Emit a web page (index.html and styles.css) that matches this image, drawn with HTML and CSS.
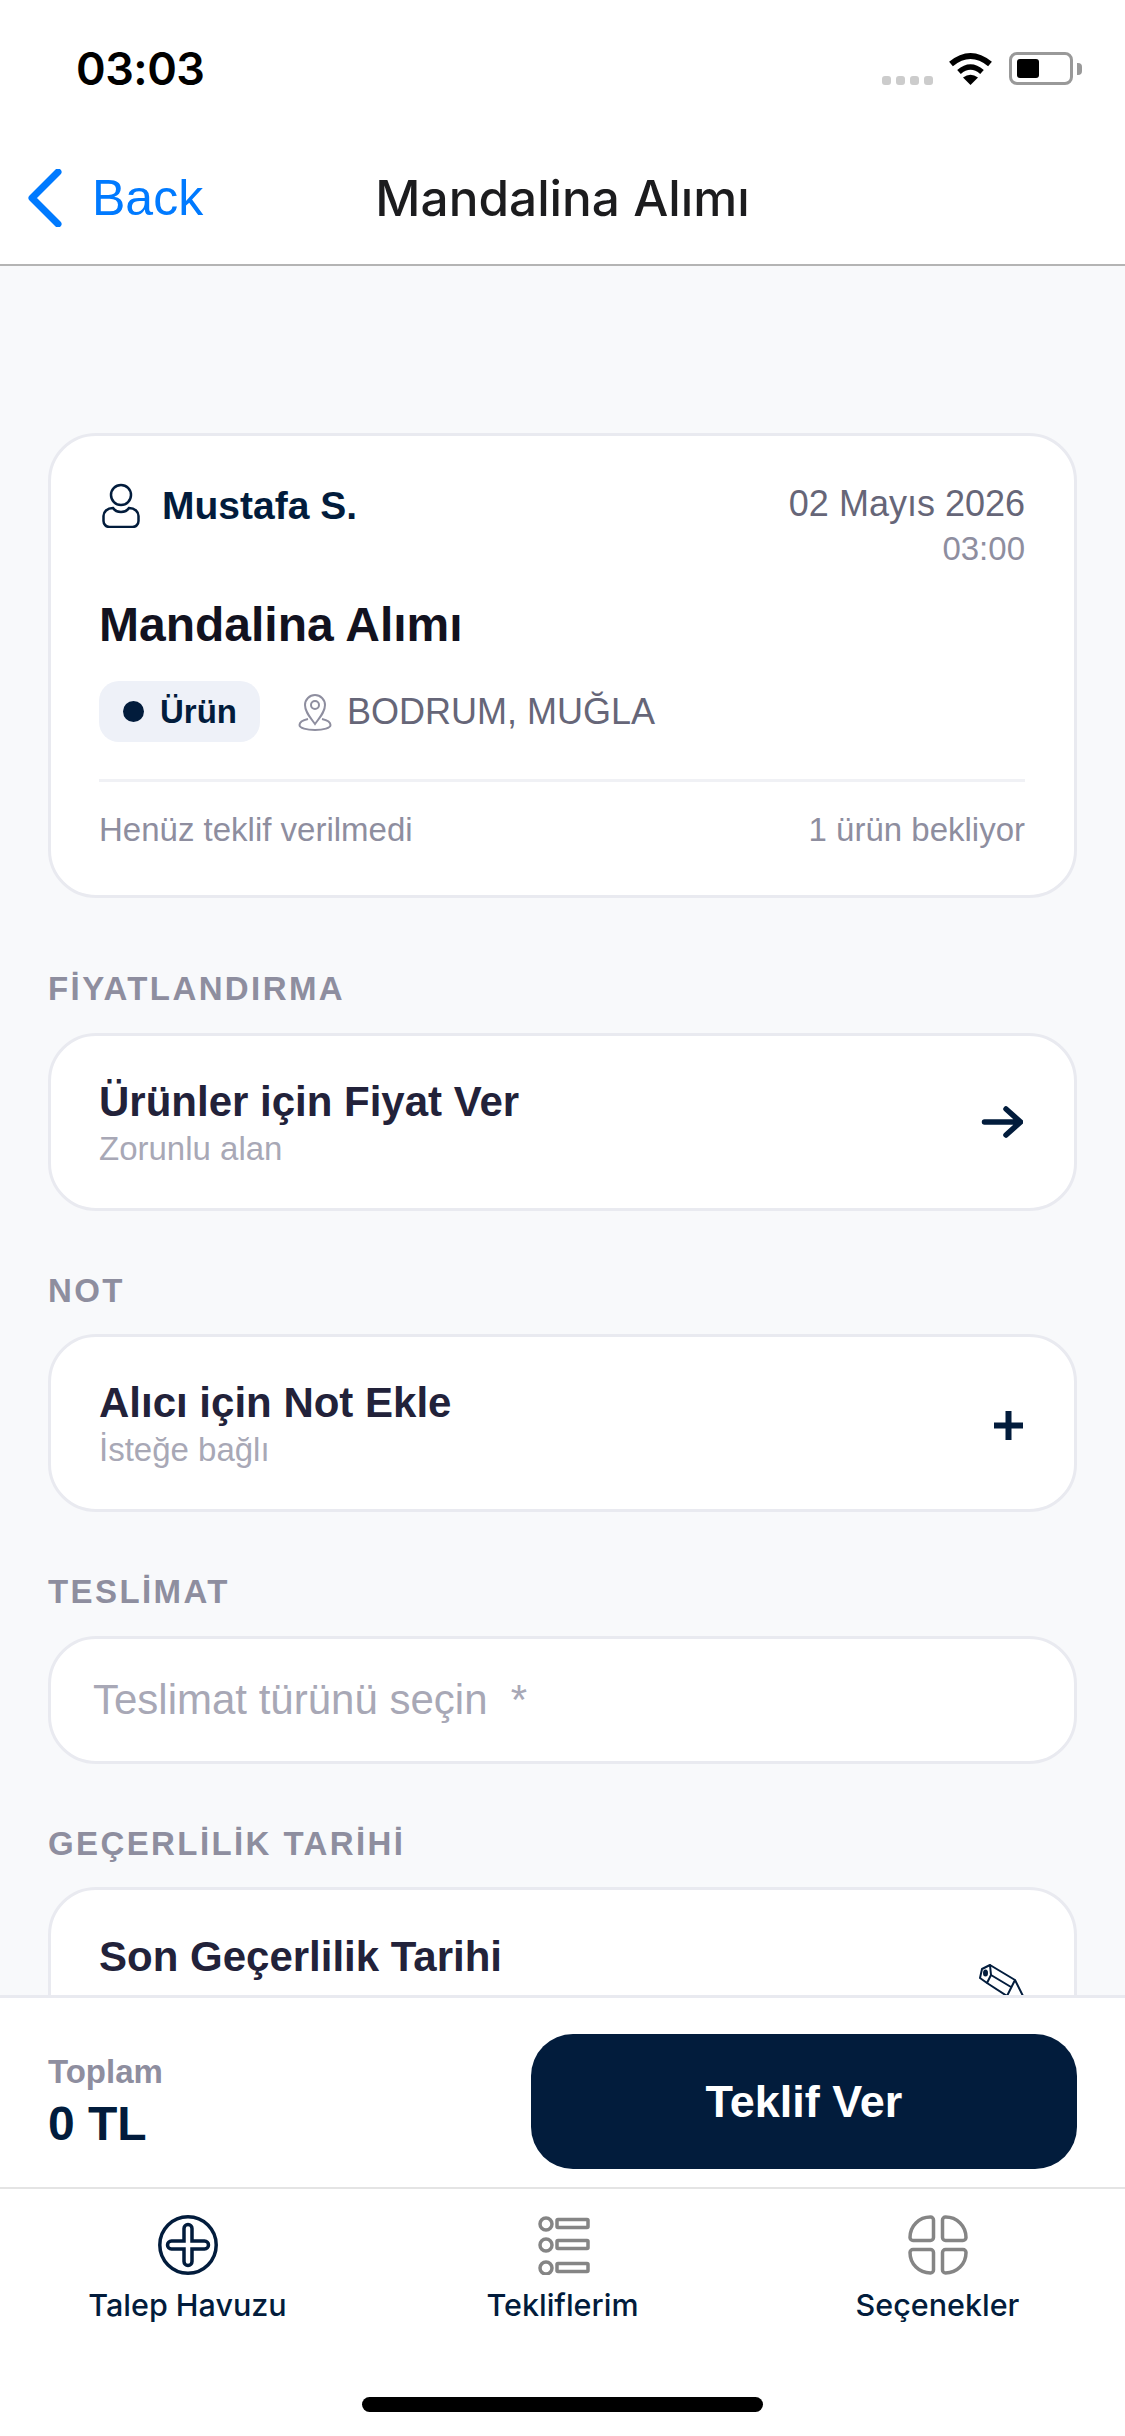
FILE: index.html
```html
<!DOCTYPE html>
<html lang="tr">
<head>
    <meta charset="UTF-8">
    <meta name="viewport" content="width=device-width, initial-scale=1.0">
    <title>Mandalina Alımı</title>
    <link rel="stylesheet" href="styles.css">
</head>
<body>
<div class="page">
    <div class="status-bar">
        <span class="clock">03:03</span>
        <div class="status-icons">
            <div class="signal"><i></i><i></i><i></i><i></i></div>
            <svg class="wifi" width="45" height="33" viewBox="0 0 45 33">
                <path d="M3 12Q22.5-4 42 12" fill="none" stroke="#000" stroke-width="6"/>
                <path d="M11 20Q22.5 10 34 20" fill="none" stroke="#000" stroke-width="5.5"/>
                <path d="M22.5 33L15 25.5Q22.5 20 30 25.5Z" fill="#000"/>
            </svg>
            <div class="battery"><div class="battery-level"></div></div>
            <div class="battery-nub"></div>
        </div>
    </div>

    <header class="nav">
        <a class="back">
            <svg width="34" height="58" viewBox="0 0 34 58">
                <path d="M30 3L4 29L30 55" fill="none" stroke="#007aff" stroke-width="7" stroke-linecap="round" stroke-linejoin="round"/>
            </svg>
            <span>Back</span>
        </a>
        <h1 class="nav-title">Mandalina Alımı</h1>
    </header>

    <main class="content">
        <section class="card request">
            <div class="request-top">
                <div class="user">
                    <svg width="38" height="45" viewBox="0 0 38 45">
                        <circle cx="19" cy="12" r="10" fill="none" stroke="#021c3c" stroke-width="2.5"/>
                        <path d="M11 25C5 25 1.5 29 1.5 33v5a6 6 0 0 0 6 6h23a6 6 0 0 0 6-6v-5c0-4-3.500-8-9.500-8c-2 3-5 4-8 4s-6-1-8-4Z" fill="none" stroke="#021c3c" stroke-width="2.500"/>
                    </svg>
                    <span class="user-name">Mustafa S.</span>
                </div>
                <div class="when">
                    <div class="date">02 Mayıs 2026</div>
                    <div class="time">03:00</div>
                </div>
            </div>
            <h2 class="request-title">Mandalina Alımı</h2>
            <div class="request-meta">
                <span class="chip"><i class="dot"></i>Ürün</span>
                <svg class="pin" width="34" height="38" viewBox="0 0 34 38">
                    <path d="M17 31C12 24 7 19 7 12a10 10 0 0 1 20 0c0 7-5 12-10 19Z" fill="none" stroke="#8e8e9f" stroke-width="2"/>
                    <circle cx="17" cy="12" r="4" fill="none" stroke="#8e8e9f" stroke-width="2"/>
                    <path d="M10 26C5 27 1.500 29 1.500 32c0 3 7 5 15.500 5s15.500-2 15.500-5c0-3-3.500-5-8.500-6" fill="none" stroke="#8e8e9f" stroke-width="2"/>
                </svg>
                <span class="place">BODRUM, MUĞLA</span>
            </div>
            <div class="request-foot">
                <span>Henüz teklif verilmedi</span>
                <span>1 ürün bekliyor</span>
            </div>
        </section>

        <section class="section">
            <h3 class="section-label">FİYATLANDIRMA</h3>
            <div class="card row-card">
                <div class="row-text">
                    <div class="row-title">Ürünler için Fiyat Ver</div>
                    <div class="row-sub">Zorunlu alan</div>
                </div>
                <svg width="42" height="34" viewBox="0 0 42 34">
                    <path d="M3.500 17H39M25 4L39.500 17L25 30" fill="none" stroke="#021c3c" stroke-width="5.500" stroke-linecap="round"/>
                </svg>
            </div>
        </section>

        <section class="section">
            <h3 class="section-label">NOT</h3>
            <div class="card row-card">
                <div class="row-text">
                    <div class="row-title">Alıcı için Not Ekle</div>
                    <div class="row-sub">İsteğe bağlı</div>
                </div>
                <svg class="plus" width="29" height="29" viewBox="0 0 29 29">
                    <path d="M14.500 0V29M0 14.500H29" fill="none" stroke="#021c3c" stroke-width="6"/>
                </svg>
            </div>
        </section>

        <section class="section">
            <h3 class="section-label">TESLİMAT</h3>
            <div class="card select">Teslimat türünü seçin  *</div>
        </section>

        <section class="section">
            <h3 class="section-label">GEÇERLİLİK TARİHİ</h3>
            <div class="card row-card">
                <div class="row-text row-text-clipped">
                    <div class="row-title">Son Geçerlilik Tarihi</div>
                </div>
                <svg class="pencil" width="46" height="52" viewBox="0 0 46 52">
                    <g fill="none" stroke="#021c3c" stroke-width="2" stroke-linejoin="round">
                        <path d="M11 1L3 5L1 14L8 19L12 11Z"/>
                        <path d="M11 1L36 16L28 32L8 19M12 11L32 23"/>
                        <path d="M36 16L44 32L46 44L28 32"/>
                    </g>
                    <ellipse cx="6.500" cy="9" rx="2.500" ry="3.500" fill="#021c3c"/>
                </svg>
            </div>
        </section>
    </main>

    <div class="total-bar">
        <div class="total">
            <div class="total-label">Toplam</div>
            <div class="total-value">0 TL</div>
        </div>
        <button class="offer-btn">Teklif Ver</button>
    </div>

    <nav class="tabbar">
        <div class="tabs">
            <div class="tab">
                <svg width="60" height="60" viewBox="0 0 60 60">
                    <circle cx="30" cy="30" r="28.200" fill="none" stroke="#021c3c" stroke-width="3.500"/>
                    <path d="M26 13.500a4 4 0 0 1 8 0V26h12.500a4 4 0 0 1 0 8H34v12.500a4 4 0 0 1-8 0V34H13.500a4 4 0 0 1 0-8H26Z" fill="none" stroke="#021c3c" stroke-width="3.500"/>
                </svg>
                <span>Talep Havuzu</span>
            </div>
            <div class="tab">
                <svg width="60" height="60" viewBox="0 0 60 60" fill="none" stroke="#858585" stroke-width="3.500">
                    <circle cx="13" cy="9" r="6"/>
                    <rect x="24" y="4.500" width="31" height="8" rx="1"/>
                    <circle cx="13" cy="30" r="6"/>
                    <rect x="24" y="25.500" width="31" height="8" rx="1"/>
                    <circle cx="13" cy="53" r="6"/>
                    <rect x="24" y="48.500" width="31" height="8" rx="1"/>
                </svg>
                <span>Tekliflerim</span>
            </div>
            <div class="tab">
                <svg width="60" height="60" viewBox="0 0 60 60" fill="none" stroke="#858585" stroke-width="3.500">
                    <path d="M22.500 2a3 3 0 0 1 3 3v17.500a3 3 0 0 1-3 3H5a3 3 0 0 1-3-3C2 11 11 2 22.500 2Z"/>
                    <path d="M37.500 2a3 3 0 0 0-3 3v17.500a3 3 0 0 0 3 3H55a3 3 0 0 0 3-3C58 11 49 2 37.500 2Z"/>
                    <path d="M22.500 58a3 3 0 0 0 3-3V37.500a3 3 0 0 0-3-3H5a3 3 0 0 0-3 3C2 49 11 58 22.500 58Z"/>
                    <path d="M37.500 58a3 3 0 0 1-3-3V37.500a3 3 0 0 1 3-3H55a3 3 0 0 1 3 3C58 49 49 58 37.500 58Z"/>
                </svg>
                <span>Seçenekler</span>
            </div>
        </div>
        <div class="home-bar"></div>
    </nav>
</div>
</body>
</html>
```

FILE: styles.css
```css
* {
    box-sizing: border-box;
}

body {
    margin: 0;
    font-family: "Liberation Sans", Arial, sans-serif;
    background-color: #fff;
}

h1, h2, h3 {
    margin: 0;
}

.page {
    width: 1125px;
    height: 2436px;
    display: flex;
    flex-direction: column;
    overflow: hidden;
}

/* status bar */
.status-bar {
    height: 150px;
    flex: none;
    display: flex;
    justify-content: space-between;
    align-items: flex-start;
    padding: 42px 43px 0 76px;
}

.clock {
    font-family: Inter, sans-serif;
    font-size: 45px;
    font-weight: 600;
    line-height: 54px;
    letter-spacing: -0.5px;
    color: #000;
}

.status-icons {
    display: flex;
    align-items: flex-end;
    margin-top: 10px;
}

.signal {
    display: flex;
    gap: 5px;
    margin-right: 15px;
}

.signal i {
    width: 9px;
    height: 9px;
    border-radius: 3px;
    background-color: #ccc;
}

.battery {
    width: 64px;
    height: 33px;
    margin-left: 16px;
    padding: 4px 5px;
    border: 3px solid #999;
    border-radius: 8px;
}

.battery-level {
    width: 22px;
    height: 100%;
    background-color: #000;
    border-radius: 3px;
}

.battery-nub {
    width: 5px;
    height: 12px;
    margin: 0 0 10px 4px;
    background-color: #999;
    border-radius: 0 4px 4px 0;
}

/* header */
.nav {
    height: 116px;
    flex: none;
    display: grid;
    grid-template-columns: 1fr auto 1fr;
    align-items: center;
    padding: 0 28px 18px;
    border-bottom: 2px solid #b4b4b4;
}

.back {
    display: flex;
    align-items: center;
    gap: 30px;
    font-size: 50px;
    color: #007aff;
}

.nav-title {
    font-family: Inter, sans-serif;
    font-size: 49.5px;
    font-weight: 500;
    color: #1c1c1e;
}

/* main area */
.content {
    flex: 1;
    min-height: 0;
    overflow: hidden;
    padding: 167px 48px 0;
    background-color: #f8f9fb;
}

.card {
    background-color: #fff;
    border: 3px solid #e9eaf0;
    border-radius: 48px;
}

.request {
    padding: 48px 49px 45px 48px;
    margin-bottom: 69px;
}

.request-top {
    display: flex;
    justify-content: space-between;
}

.user {
    display: flex;
    align-items: center;
    gap: 22px;
    height: 45px;
    margin: -1px 0 0 3px;
}

.user-name {
    font-size: 39px;
    font-weight: bold;
    color: #021c3c;
}

.when {
    text-align: right;
}

.date {
    font-size: 36px;
    line-height: 40px;
    color: #666678;
}

.time {
    font-size: 33px;
    line-height: 40px;
    margin-top: 5px;
    color: #8e8e9f;
}

.request-title {
    margin-top: 28px;
    font-size: 48px;
    line-height: 56px;
    color: #12121f;
}

.request-meta {
    display: flex;
    align-items: center;
    margin-top: 28px;
}

.chip {
    display: flex;
    align-items: center;
    height: 61px;
    padding: 0 23px 0 24px;
    gap: 16px;
    border-radius: 20px;
    background-color: #eef1f8;
    font-size: 33px;
    font-weight: bold;
    color: #021c3c;
}

.dot {
    width: 21px;
    height: 21px;
    border-radius: 50%;
    background-color: #021c3c;
}

.pin {
    margin-left: 38px;
}

.place {
    margin-left: 15px;
    font-size: 36px;
    color: #666678;
}

.request-foot {
    display: flex;
    justify-content: space-between;
    margin-top: 37px;
    padding-top: 28px;
    border-top: 3px solid #f0f1f5;
    font-size: 33px;
    line-height: 40px;
    color: #8e8e9f;
}

.section {
    margin-top: 58px;
}

.section-label {
    font-size: 33px;
    line-height: 44px;
    letter-spacing: 2.4px;
    color: #8e8e9f;
    margin-bottom: 21.5px;
}

.row-card {
    height: 178px;
    display: flex;
    justify-content: space-between;
    align-items: center;
    padding: 0 51px 0 48px;
}

.row-text {
    margin-top: 2px;
}

.row-text-clipped {
    height: 91px;
}

.row-title {
    font-size: 42px;
    font-weight: bold;
    line-height: 50px;
    color: #22223a;
}

.row-sub {
    margin-top: 2px;
    font-size: 33px;
    line-height: 40px;
    color: #a8a8b6;
}

.plus {
    margin-top: 4px;
}

.pencil {
    margin: 27px -2px 0 0;
}

.select {
    height: 128px;
    display: flex;
    align-items: center;
    padding-left: 42px;
    font-size: 42px;
    color: #a8a8b6;
    white-space: pre;
}

/* bottom */
.total-bar {
    height: 192px;
    flex: none;
    display: flex;
    justify-content: space-between;
    align-items: center;
    padding: 18px 48px 0;
    background-color: #fff;
    border-top: 3px solid #e9eaf0;
}

.total-label {
    font-size: 33px;
    font-weight: bold;
    line-height: 40px;
    color: #8e8e9f;
}

.total-value {
    margin-top: 4px;
    font-size: 48px;
    font-weight: bold;
    line-height: 56px;
    color: #021c3c;
}

.offer-btn {
    width: 546px;
    height: 135px;
    border: none;
    border-radius: 42px;
    background-color: #021c3c;
    color: #fff;
    font-family: "Liberation Sans", Arial, sans-serif;
    font-size: 45px;
    font-weight: bold;
    cursor: pointer;
}

.tabbar {
    height: 249px;
    flex: none;
    display: flex;
    flex-direction: column;
    border-top: 2px solid #e4e4e4;
}

.tabs {
    display: grid;
    grid-template-columns: repeat(3, 375px);
    padding-top: 26px;
}

.tab {
    display: flex;
    flex-direction: column;
    align-items: center;
    font-family: Inter, sans-serif;
    font-size: 30.5px;
    font-weight: 500;
    line-height: 40px;
    color: #021c3c;
}

.tab span {
    margin-top: 10px;
}

.home-bar {
    width: 401px;
    height: 15px;
    margin: auto auto 24px;
    background-color: #000;
    border-radius: 8px;
}
```
